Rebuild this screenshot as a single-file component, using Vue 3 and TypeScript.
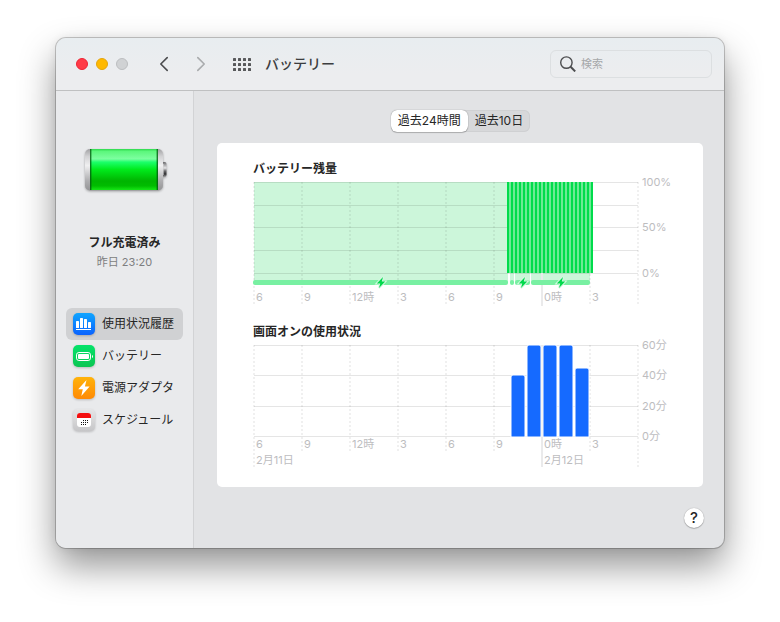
<script setup lang="ts">
import { computed, ref } from 'vue'

type Pane = 'history' | 'battery' | 'adapter' | 'schedule'
type Range = 'day' | 'tenDays'

interface Tick {
  hour: number
  label: string
  major?: boolean
  date?: string
}

const panes: { id: Pane; label: string }[] = [
  { id: 'history', label: '使用状況履歴' },
  { id: 'battery', label: 'バッテリー' },
  { id: 'adapter', label: '電源アダプタ' },
  { id: 'schedule', label: 'スケジュール' },
]
const ranges: { id: Range; label: string }[] = [
  { id: 'day', label: '過去24時間' },
  { id: 'tenDays', label: '過去10日' },
]

const pane = ref<Pane>('history')
const range = ref<Range>('day')
const query = ref('')

const ticks: Tick[] = [
  { hour: 0, label: '6', date: '2月11日' },
  { hour: 3, label: '9' },
  { hour: 6, label: '12時' },
  { hour: 9, label: '3' },
  { hour: 12, label: '6' },
  { hour: 15, label: '9' },
  { hour: 18, label: '0時', major: true, date: '2月12日' },
  { hour: 21, label: '3' },
  { hour: 24, label: '' },
]

const hourWidth = 16
const plotLeft = 1
const plotTop = 4
const plotHeight = 92
const plotBottom = plotTop + plotHeight

const xAt = (hour: number) => plotLeft + hour * hourWidth
const yAt = (fraction: number) => plotBottom - Math.round(fraction * (plotHeight - 1))

/* Battery level samples, one every fifteen minutes once the Mac woke up. */
const levels = Array.from({ length: 22 }, (_, i) => ({ x: 254 + i * 4, level: 1 }))
const levelLines = [0, 0.25, 0.5, 0.75, 1]
const levelLabels = [
  { at: 1, text: '100%' },
  { at: 0.5, text: '50%' },
  { at: 0, text: '0%' },
]
const charging = [
  { from: 0, to: 255 },
  { from: 257, to: 261 },
  { from: 262, to: 277 },
  { from: 278, to: 337 },
]
const bolts = [128, 270, 308]

/* Minutes of screen use for each hour. */
const usage = [
  { hour: 16, minutes: 40 },
  { hour: 17, minutes: 60 },
  { hour: 18, minutes: 60 },
  { hour: 19, minutes: 60 },
  { hour: 20, minutes: 45 },
]
const minuteMarks = [60, 40, 20, 0]
const usageBars = computed(() =>
  usage.map(({ hour, minutes }) => {
    const left = xAt(hour) + 1
    const top = yAt(minutes / 60) - 1
    return `M${left} ${plotBottom}V${top + 2}q0 -2 2 -2h10q2 0 2 2V${plotBottom}z`
  }),
)

/* Day dots on the calendar icon. */
const days = [
  [11, 12], [13, 12], [15, 12],
  [9, 14], [11, 14], [13, 14], [15, 14],
  [9, 16], [11, 16], [13, 16],
]
</script>

<template>
  <div class="desktop">
    <div class="window">
      <header class="toolbar">
        <div class="lights">
          <button class="light close" aria-label="閉じる"></button>
          <button class="light minimize" aria-label="しまう"></button>
          <button class="light zoom" aria-label="拡大" disabled></button>
        </div>
        <div class="history-buttons">
          <button class="plain" aria-label="戻る">
            <svg width="10" height="16" viewBox="0 0 10 16"><path d="M8.2 1.6 1.8 8l6.4 6.4" /></svg>
          </button>
          <button class="plain forward" aria-label="進む" disabled>
            <svg width="10" height="16" viewBox="0 0 10 16"><path d="M1.8 1.6 8.2 8l-6.4 6.4" /></svg>
          </button>
        </div>
        <button class="plain grid-button" aria-label="すべてを表示">
          <svg width="18" height="13" viewBox="0 0 18 13">
            <template v-for="row in 3" :key="row">
              <rect v-for="col in 4" :key="col" :x="(col - 1) * 5" :y="(row - 1) * 5" width="3" height="3" rx="0.6" />
            </template>
          </svg>
        </button>
        <h1>バッテリー</h1>
        <label class="search">
          <svg width="16" height="16" viewBox="0 0 16 16">
            <circle cx="6.4" cy="6.6" r="5.7" />
            <path d="m10.6 10.8 4.6 4.6" />
          </svg>
          <input v-model="query" type="search" placeholder="検索" aria-label="検索" />
        </label>
      </header>

      <div class="body">
        <aside class="sidebar">
          <svg class="battery" width="87" height="52" viewBox="0 0 87 52" aria-hidden="true">
            <defs>
              <linearGradient id="shell" x1="0" y1="0" x2="0" y2="1">
                <stop offset="0" stop-color="#a2a2a4" />
                <stop offset="0.18" stop-color="#d2d2d4" />
                <stop offset="0.4" stop-color="#f0f0f1" />
                <stop offset="0.75" stop-color="#b0b0b2" />
                <stop offset="1" stop-color="#949496" />
              </linearGradient>
              <linearGradient id="charge" x1="0" y1="0" x2="0" y2="1">
                <stop offset="0" stop-color="#2ed94d" />
                <stop offset="0.06" stop-color="#5cf77c" />
                <stop offset="0.24" stop-color="#7dffa0" />
                <stop offset="0.32" stop-color="#1bff6a" />
                <stop offset="0.5" stop-color="#00ea1c" />
                <stop offset="0.78" stop-color="#00b400" />
                <stop offset="0.9" stop-color="#00bd00" />
                <stop offset="1" stop-color="#16e516" />
              </linearGradient>
              <linearGradient id="nub" x1="0" y1="0" x2="0" y2="1">
                <stop offset="0" stop-color="#6a6a6c" />
                <stop offset="0.4" stop-color="#e6e6e8" />
                <stop offset="0.6" stop-color="#6b6b6d" />
                <stop offset="0.8" stop-color="#303032" />
                <stop offset="1" stop-color="#a0a0a2" />
              </linearGradient>
            </defs>
            <rect x="79" y="17" width="6.5" height="15" rx="2" fill="url(#nub)" />
            <rect x="81" y="19" width="2" height="11" fill="#d0d0d2" opacity="0.6" />
            <rect x="4" y="4" width="78" height="41.5" rx="5" fill="url(#shell)" />
            <rect x="9" y="4" width="68" height="41" fill="url(#charge)" />
            <rect x="9" y="4" width="1.4" height="41" fill="#045c10" opacity="0.8" />
            <rect x="75.6" y="4" width="1.4" height="41" fill="#045c10" opacity="0.8" />
          </svg>
          <p class="status">フル充電済み</p>
          <p class="since">昨日 23:20</p>

          <nav>
            <a
              v-for="item in panes"
              :key="item.id"
              :href="'#' + item.id"
              :class="{ selected: pane === item.id }"
              @click.prevent="pane = item.id"
            >
              <svg v-if="item.id === 'history'" class="icon" width="24" height="24" viewBox="0 0 24 24">
                <linearGradient id="blue" x1="0" y1="0" x2="0" y2="1">
                  <stop offset="0" stop-color="#0fa5ff" />
                  <stop offset="1" stop-color="#0a62ff" />
                </linearGradient>
                <rect x="1" y="1" width="22" height="22" rx="5" fill="url(#blue)" />
                <g fill="#fff">
                  <rect x="4" y="9" width="3" height="7" rx="0.6" />
                  <rect x="8" y="6" width="3" height="10" rx="0.6" />
                  <rect x="12" y="7" width="3" height="9" rx="0.6" />
                  <rect x="16" y="10" width="3" height="6" rx="0.6" />
                  <rect x="4" y="17" width="15" height="1" />
                </g>
              </svg>
              <svg v-else-if="item.id === 'battery'" class="icon" width="24" height="24" viewBox="0 0 24 24">
                <linearGradient id="green" x1="0" y1="0" x2="0" y2="1">
                  <stop offset="0" stop-color="#04e36a" />
                  <stop offset="1" stop-color="#0bc552" />
                </linearGradient>
                <rect x="1" y="1" width="22" height="22" rx="5" fill="url(#green)" />
                <rect x="4.5" y="8.5" width="14" height="8" rx="2.4" fill="none" stroke="#fff" />
                <rect x="6" y="10" width="11" height="5" rx="1" fill="#fff" />
                <path d="M20 11v3q1-.4 1-1.500t-1-1.500z" fill="#fff" />
              </svg>
              <svg v-else-if="item.id === 'adapter'" class="icon" width="24" height="24" viewBox="0 0 24 24">
                <linearGradient id="orange" x1="0" y1="0" x2="0" y2="1">
                  <stop offset="0" stop-color="#ffb30a" />
                  <stop offset="1" stop-color="#ff8a05" />
                </linearGradient>
                <rect x="1" y="1" width="22" height="22" rx="5" fill="url(#orange)" />
                <path d="M14.500 4 6.200 13.300h4.600L9.300 20l8.300-9.600h-4.700z" fill="#fff" />
              </svg>
              <svg v-else class="icon" width="24" height="24" viewBox="0 0 24 24">
                <linearGradient id="gray" x1="0" y1="0" x2="0" y2="1">
                  <stop offset="0" stop-color="#e6e6e7" />
                  <stop offset="1" stop-color="#c6c6c8" />
                </linearGradient>
                <rect x="1" y="1" width="22" height="22" rx="5" fill="url(#gray)" />
                <rect x="5" y="5" width="14" height="14" rx="3" fill="#fff" />
                <path d="M5 10V8q0-3 3-3h8q3 0 3 3v2z" fill="#f40f0f" />
                <rect
                  v-for="[x, y] in days"
                  :key="`${x}-${y}`"
                  :x="x"
                  :y="y"
                  width="1"
                  height="1"
                  fill="#111"
                />
              </svg>
              <span>{{ item.label }}</span>
            </a>
          </nav>
        </aside>

        <main>
          <div class="segments" role="group">
            <button
              v-for="item in ranges"
              :key="item.id"
              :class="{ active: range === item.id }"
              :aria-pressed="range === item.id"
              @click="range = item.id"
            >
              {{ item.label }}
            </button>
          </div>

          <section class="card">
            <h2>バッテリー残量</h2>
            <svg class="chart" viewBox="0 1 420 129">
              <rect class="charged" x="1" y="4" width="254" height="101" />
              <rect class="charged" x="255" y="4" width="82" height="91" />
              <rect class="charged" x="257" y="95" width="4" height="10" />
              <rect class="charged" x="262" y="95" width="15" height="10" />
              <rect class="charged" x="278" y="95" width="59" height="10" />
              <g class="rules">
                <line v-for="l in levelLines" :key="l" x1="1" x2="385" :y1="yAt(l) - 0.5" :y2="yAt(l) - 0.5" />
              </g>
              <line
                v-for="t in ticks"
                :key="t.hour"
                :class="t.major ? 'midnight' : 'dotted'"
                :x1="xAt(t.hour)"
                :x2="xAt(t.hour)"
                y1="4"
                :y2="t.major ? 128 : 126"
              />
              <rect class="level-gap" x="254" y="4" width="86" height="91" />
              <rect
                v-for="s in levels"
                :key="s.x"
                class="level"
                :x="s.x"
                :y="yAt(s.level) - 1"
                width="2"
                :height="s.level * 91"
              />
              <rect
                v-for="c in charging"
                :key="c.from"
                class="charging"
                :x="c.from"
                y="102"
                :width="c.to - c.from"
                height="5"
                rx="2"
              />
              <path
                v-for="b in bolts"
                :key="b"
                class="bolt"
                :transform="`translate(${b} 104.5)`"
                d="M2-5.500-4.200 1h3.400L-2 5.500 4.200-1H.8z"
              />
              <text v-for="t in ticks" :key="t.hour" :x="xAt(t.hour) + 2" y="123">{{ t.label }}</text>
              <text v-for="l in levelLabels" :key="l.at" x="389" :y="yAt(l.at) + 3">{{ l.text }}</text>
            </svg>

            <h2 class="second">画面オンの使用状況</h2>
            <svg class="chart" viewBox="0 1 420 129">
              <g class="rules">
                <line
                  v-for="m in minuteMarks"
                  :key="m"
                  x1="1"
                  x2="385"
                  :y1="yAt(m / 60) - 0.5"
                  :y2="yAt(m / 60) - 0.5"
                />
              </g>
              <line
                v-for="t in ticks"
                :key="t.hour"
                :class="t.major ? 'midnight' : 'dotted'"
                :x1="xAt(t.hour)"
                :x2="xAt(t.hour)"
                y1="4"
                :y2="t.date || !t.label ? 126 : 110"
              />
              <path v-for="d in usageBars" :key="d" class="usage" :d="d" />
              <text v-for="t in ticks" :key="t.hour" :x="xAt(t.hour) + 2" y="107">{{ t.label }}</text>
              <template v-for="t in ticks" :key="t.hour">
                <text v-if="t.date" :x="xAt(t.hour) + 2" y="123">{{ t.date }}</text>
              </template>
              <text v-for="m in minuteMarks" :key="m" x="389" :y="yAt(m / 60) + 3">{{ m }}分</text>
            </svg>
          </section>

          <button class="help" aria-label="ヘルプ">?</button>
        </main>
      </div>
    </div>
  </div>
</template>

<style>
body {
  margin: 0;
  background: #fff;
}
</style>

<style scoped>
.desktop {
  box-sizing: border-box;
  min-height: 100vh;
  padding: 38px 56px 74px;
  display: flex;
  font-family: Inter, 'Noto Sans CJK JP', sans-serif;
  color: #262626;
}
.window {
  flex: 1;
  display: flex;
  flex-direction: column;
  border-radius: 10px;
  overflow: hidden;
  background: #e2e3e5;
  box-shadow:
    0 0 0 1px rgba(0, 0, 0, 0.2),
    0 18px 36px rgba(0, 0, 0, 0.42),
    0 0 10px rgba(0, 0, 0, 0.08);
}
button {
  font: inherit;
  color: inherit;
  border: 0;
  padding: 0;
  background: none;
}
h1,
h2,
p {
  margin: 0;
}

.toolbar {
  height: 52px;
  flex: none;
  display: flex;
  align-items: center;
  padding: 0 12px 0 20px;
  background: linear-gradient(#e8edf0, #ecedef 70%);
  border-bottom: 1px solid #bfc0c1;
}
.lights {
  display: flex;
  gap: 8px;
}
.light {
  width: 12px;
  height: 12px;
  border-radius: 50%;
}
.close {
  background: #ff3b47;
  border: 1px solid #ee2434;
}
.minimize {
  background: #ffb900;
  border: 1px solid #e5a50b;
}
.zoom {
  background: #d0d2d4;
  border: 1px solid #bcbec0;
}
.history-buttons {
  display: flex;
  gap: 27px;
  margin-left: 31px;
}
.plain {
  display: flex;
}
.plain path {
  fill: none;
  stroke: #4c4d4f;
  stroke-width: 1.6;
  stroke-linecap: round;
  stroke-linejoin: round;
}
.forward path {
  stroke: #a9abad;
}
.grid-button {
  margin-left: 27px;
  fill: #58595b;
}
h1 {
  margin-left: 14px;
  font-size: 14px;
  line-height: 20px;
  font-weight: 500;
  color: #3c3d3f;
}
.search {
  box-sizing: border-box;
  width: 162px;
  height: 28px;
  margin-left: auto;
  padding: 0 8px 0 9px;
  display: flex;
  align-items: center;
  gap: 5px;
  border: 1px solid #dcdfe1;
  border-radius: 6px;
}
.search svg {
  flex: none;
  fill: none;
  stroke: #4c4d4f;
  stroke-width: 1.4;
}
.search path {
  stroke-width: 2;
}
.search input {
  min-width: 0;
  flex: 1;
  border: 0;
  padding: 0;
  background: none;
  font: inherit;
  font-size: 11px;
  outline: none;
}
.search input::placeholder {
  color: #a6a8aa;
}

.body {
  flex: 1;
  display: flex;
}
.sidebar {
  box-sizing: border-box;
  width: 138px;
  flex: none;
  padding: 54px 10px 20px;
  display: flex;
  flex-direction: column;
  align-items: center;
  background: #e9eaec;
  border-right: 1px solid #d2d3d5;
}
.battery {
  filter: drop-shadow(0 1px 1px rgba(0, 0, 0, 0.3));
}
.status {
  margin-top: 38px;
  font-size: 12px;
  line-height: 16px;
  font-weight: 700;
}
.since {
  margin-top: 3px;
  font-size: 11px;
  line-height: 16px;
  color: #7d7e80;
}
nav {
  align-self: stretch;
  margin-top: 38px;
}
nav a {
  height: 32px;
  display: flex;
  align-items: center;
  gap: 6px;
  padding-left: 6px;
  border-radius: 6px;
  font-size: 12px;
  line-height: 16px;
  color: #262626;
  text-decoration: none;
  white-space: nowrap;
}
nav a.selected {
  background: #d0d1d3;
}
.icon {
  flex: none;
  filter: drop-shadow(0 1px 1px rgba(0, 0, 0, 0.2));
}

main {
  flex: 1;
  min-width: 0;
  padding: 19px 20px 20px 23px;
  display: flex;
  flex-direction: column;
}
.segments {
  align-self: center;
  display: flex;
  height: 22px;
  border-radius: 6px;
  background: #d7d8da;
  box-shadow: inset 0 0 0 1px #cfd0d2;
}
.segments button {
  padding: 0 7px;
  border-radius: 6px;
  font-size: 12px;
  line-height: 20px;
}
.segments .active {
  background: #fff;
  box-shadow: 0 0 1px rgba(0, 0, 0, 0.5), 0 1px 1px rgba(0, 0, 0, 0.2);
}
.card {
  margin: 11px 1px 0 0;
  padding: 16px 30px 16px 36px;
  border-radius: 5px;
  background: #fff;
}
h2 {
  font-size: 12px;
  line-height: 20px;
  font-weight: 700;
}
.second {
  margin-top: 14px;
}
.chart {
  display: block;
  width: 100%;
  overflow: visible;
}
.chart text {
  font-size: 11px;
  fill: #bdbdbf;
}
.rules {
  stroke: #000;
  stroke-opacity: 0.1;
}
.dotted {
  stroke: #000;
  stroke-opacity: 0.12;
  stroke-dasharray: 2 2;
}
.midnight {
  stroke: #eaeaeb;
  stroke-width: 2;
}
.charged {
  fill: #ccf6da;
}
.level-gap {
  fill: #6dea95;
}
.level {
  fill: #00dc4b;
}
.charging {
  fill: #78f0a2;
}
.bolt {
  fill: #00d94c;
  stroke: #d5f9e1;
  stroke-width: 2;
  paint-order: stroke;
}
.usage {
  fill: #156aff;
  stroke: #fff;
  stroke-width: 1;
}
.help {
  align-self: flex-end;
  width: 20px;
  height: 20px;
  margin-top: 21px;
  border-radius: 50%;
  background: #fff;
  box-shadow: 0 0 1px rgba(0, 0, 0, 0.4), 0 1px 1px rgba(0, 0, 0, 0.2);
  font-size: 15px;
  line-height: 20px;
  font-weight: 500;
  text-align: center;
}
</style>
